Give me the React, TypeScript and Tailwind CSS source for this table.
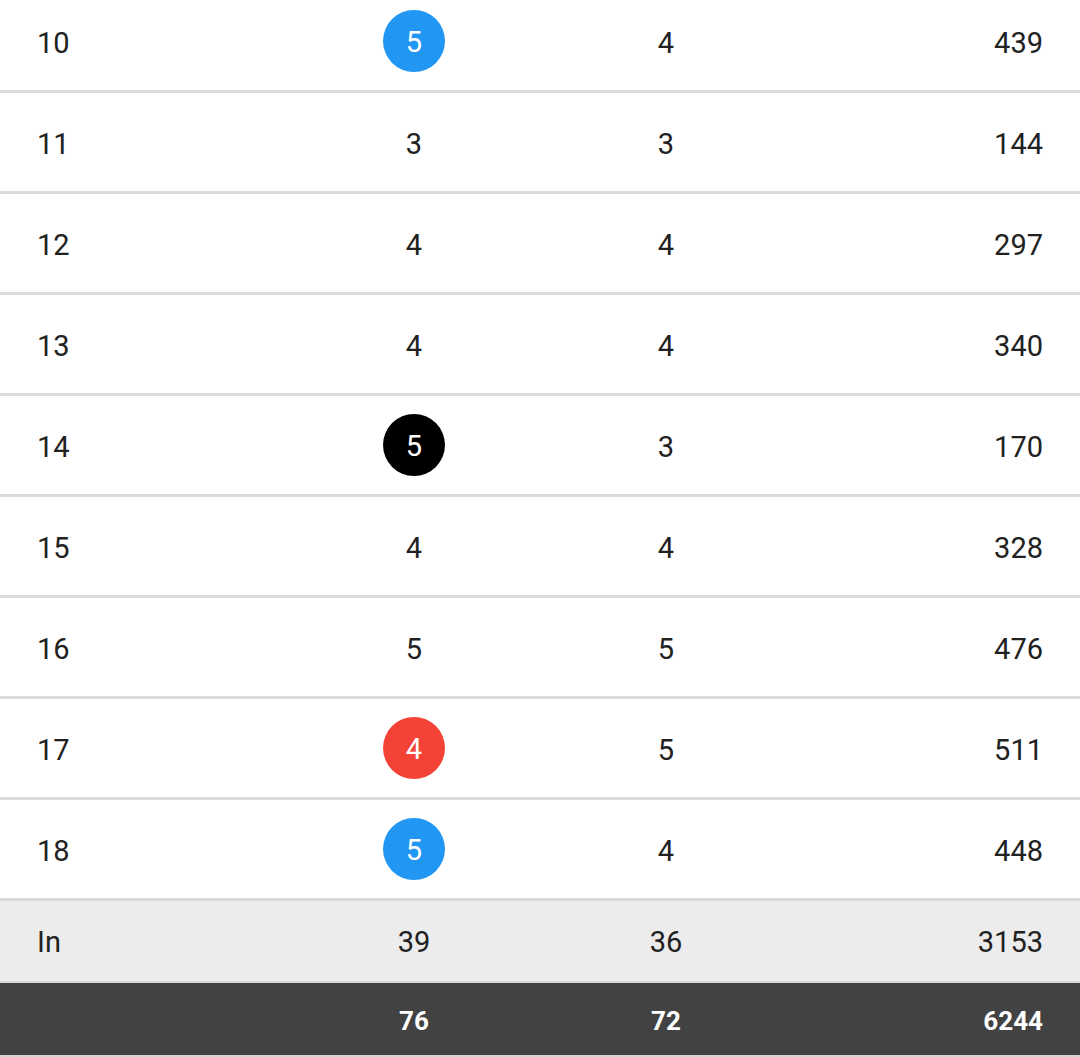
const HOLES = [
  { hole: "10", score: 5, par: 4, yards: 439, mark: "blue" },
  { hole: "11", score: 3, par: 3, yards: 144 },
  { hole: "12", score: 4, par: 4, yards: 297 },
  { hole: "13", score: 4, par: 4, yards: 340 },
  { hole: "14", score: 5, par: 3, yards: 170, mark: "black" },
  { hole: "15", score: 4, par: 4, yards: 328 },
  { hole: "16", score: 5, par: 5, yards: 476 },
  { hole: "17", score: 4, par: 5, yards: 511, mark: "red" },
  { hole: "18", score: 5, par: 4, yards: 448, mark: "blue" },
] as const;

const GRID = "grid grid-cols-[288px_252px_252px_288px] items-center";

function Score({ value, mark }: { value: number; mark?: string }) {
  if (!mark) return <span className="pt-[6px]">{value}</span>;
  const bg =
    mark === "blue"
      ? "bg-[#2196f3]"
      : mark === "red"
        ? "bg-[#f44336]"
        : "bg-black";
  return (
    <span
      className={`flex size-[62px] items-center justify-center rounded-full pt-[4px] text-white ${bg}`}
    >
      {value}
    </span>
  );
}

export default function App() {
  return (
    <div
      className="h-[1057px] w-[1080px] overflow-hidden bg-white text-[29px] text-[#212121]"
      style={{ fontFamily: "Roboto, 'Noto Sans', sans-serif" }}
    >
      <div className="-mt-[8px]">
        {HOLES.map((h) => (
          <div
            key={h.hole}
            className={`${GRID} h-[101px] border-b-[3px] border-[#dadada]`}
          >
            <span className="pl-[37px] pt-[6px]">{h.hole}</span>
            <span className="flex justify-center">
              <Score value={h.score} mark={"mark" in h ? h.mark : undefined} />
            </span>
            <span className="pt-[6px] text-center">{h.par}</span>
            <span className="pr-[37px] pt-[6px] text-right">{h.yards}</span>
          </div>
        ))}
      </div>

      <div
        className={`${GRID} h-[82px] border-b-[2px] border-[#d6d6d6] bg-[#ececec] pt-[4px]`}
      >
        <span className="pl-[37px]">In</span>
        <span className="text-center">39</span>
        <span className="text-center">36</span>
        <span className="pr-[37px] text-right">3153</span>
      </div>

      <div
        className={`${GRID} h-[74px] border-b-[2px] border-[#d6d6d6] bg-[#424242] pt-[4px] text-[26px] font-bold text-white`}
      >
        <span />
        <span className="text-center">76</span>
        <span className="text-center">72</span>
        <span className="pr-[37px] text-right">6244</span>
      </div>
    </div>
  );
}
